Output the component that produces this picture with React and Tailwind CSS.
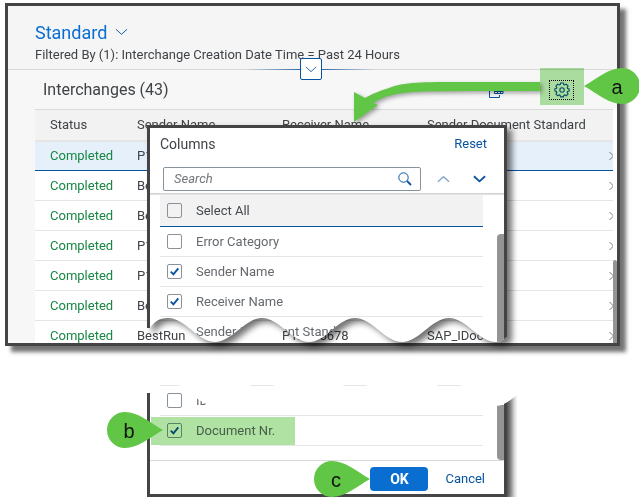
import React from "react";

const rows = [
  ["P12345678", "BestRun", "SAP_IDoc"],
  ["BestRun", "P12345678", "SAP_IDoc"],
  ["BestRun", "P12345678", "SAP_IDoc"],
  ["P12345678", "BestRun", "SAP_IDoc"],
  ["P12345678", "BestRun", "SAP_IDoc"],
  ["BestRun", "P12345678", "SAP_IDoc"],
  ["BestRun", "P12345678", "SAP_IDoc"],
];

function Chevron({ up = false, className }) {
  return (
    <svg viewBox="0 0 14 8" fill="none" stroke="currentColor" className={className} aria-hidden="true">
      <path d={up ? "M1 7 7 1.5 13 7" : "M1 1 7 6.5 13 1"} />
    </svg>
  );
}

function CheckRow({ label, checked = false, className = "" }) {
  return (
    <label className={`flex items-center gap-[14px] border-b pl-[7px] text-[#666a6e] ${className}`}>
      <span className="grid size-[15px] shrink-0">
        <input
          type="checkbox"
          defaultChecked={checked}
          className="peer col-start-1 row-start-1 size-[15px] appearance-none rounded-xs border border-[#89919a] bg-transparent"
        />
        <svg
          viewBox="0 0 15 15"
          className="pointer-events-none invisible col-start-1 row-start-1 size-[15px] peer-checked:visible"
          fill="none"
          stroke="#0854a0"
          strokeWidth="1.9"
          aria-hidden="true"
        >
          <path d="M3.8 7.6 6.4 10.4 11.3 4.4" />
        </svg>
      </span>
      {label}
    </label>
  );
}

/* Drop-shaped step marker; its tip points left or right. */
function Marker({ letter, left = false, className }) {
  return (
    <div className={`absolute h-[36px] w-[56px] ${className}`}>
      <svg viewBox="0 0 56 36" className="h-full w-full" aria-hidden="true">
        <path
          fill="#61c546"
          d={
            left
              ? "M0 18C14 10 25 0 38 0A18 18 0 0 1 38 36C25 36 14 26 0 18Z"
              : "M56 18C42 10 31 0 18 0A18 18 0 0 0 18 36C31 36 42 26 56 18Z"
          }
        />
        <text
          x={left ? 33 : 22}
          y="26"
          textAnchor="middle"
          className="fill-[#111] font-['Liberation_Sans',sans-serif] text-[20px]"
        >
          {letter}
        </text>
      </svg>
    </div>
  );
}

function Interchanges() {
  return (
    <main className="mr-[19px] ml-[5px] border-3 border-[#444] bg-[#f7f7f7] shadow-[6px_6px_4px_rgba(0,0,0,0.55)]">
      <header className="relative border-b border-[#d9d9d9] bg-[#f5f5f5] pt-[14px] pb-[4px] pl-[27px]">
        <button className="flex h-6 items-center gap-2 text-[18px] text-[#0a6ed1]">
          Standard
          <Chevron className="h-[8px] w-[13px] text-[#0854a0]" />
        </button>
        <p className="mt-px h-5 text-[13px] leading-5">
          Filtered By (1): Interchange Creation Date Time = Past 24 Hours
        </p>
        <div className="absolute right-1 -bottom-px left-0 mx-auto h-px w-[130px] bg-linear-to-r from-transparent via-[#0854a0] to-transparent" />
        <button
          aria-label="Expand header"
          className="absolute top-[52px] right-1 left-0 mx-auto flex size-[22px] items-center justify-center rounded-xs border border-[#0854a0] bg-white text-[#0854a0]"
        >
          <Chevron className="h-[7px] w-[12px]" />
        </button>
      </header>
      <div className="flex h-[39px] items-center justify-between pr-[43px] pl-[35px]">
        <h1 className="text-[16px]">Interchanges (43)</h1>
        <div className="flex items-center text-[#0854a0]">
          <button aria-label="Export" className="mr-[18px]">
            <svg viewBox="0 0 16 16" className="size-[16px]" fill="none" stroke="currentColor" aria-hidden="true">
              <path d="M5 2.500H1.500V15.500H11.500V13M6.500 4.500H15V11.500H6.500ZM6.500 7H15M6.500 9.500H15M9.500 4.500V11.500M12.500 4.500V11.500" />
            </svg>
          </button>
          <button aria-label="Export options" className="mr-[20px]">
            <Chevron className="h-[5px] w-[7px]" />
          </button>
          <button
            aria-label="Settings"
            className="flex h-[20px] w-[25px] items-center justify-center border border-dotted border-black"
          >
            <svg viewBox="0 0 16 16" className="size-[16px]" fill="none" stroke="currentColor" strokeWidth="1.100" aria-hidden="true">
              <path d="M6.600 1h2.800l.4 1.600 1 .4 1.500-.9 1.800 1.900-.9 1.500.4 1 1.500.3v2.300l-1.500.4-.4 1 .9 1.400-1.800 1.900-1.500-.9-1 .4-.4 1.600H6.600l-.4-1.600-1-.4-1.500.9L1.900 11.900l.9-1.400-.4-1L.9 9.100V6.800l1.500-.3.4-1L1.900 4l1.800-1.900 1.500.9 1-.4Z" />
              <circle cx="8" cy="8" r="2.200" />
            </svg>
          </button>
        </div>
      </div>
      <div className="flex h-[234px] items-end overflow-hidden pl-[27px]">
        <div className="h-full flex-1 overflow-hidden bg-white">
          <table className="w-full table-fixed border-collapse text-left text-[13px]">
            <thead>
              <tr className="h-[31px] border-t border-b-2 border-t-[#d9d9d9] border-b-[#e5e5e5] bg-[#f2f2f2]">
                <th className="w-[102px] pl-[15px] font-normal">Status</th>
                <th className="w-[145px] font-normal">Sender Name</th>
                <th className="w-[145px] font-normal">Receiver Name</th>
                <th className="font-normal">Sender Document Standard</th>
              </tr>
            </thead>
            <tbody>
              {rows.map((r, i) => (
                <tr
                  key={i}
                  className={
                    i === 0
                      ? "h-[30px] border-b border-[#0854a0] bg-[#e5f0fa]"
                      : "h-[30px] border-b border-[#e5e5e5] bg-white"
                  }
                >
                  <td className="pl-[15px] text-[#198744]">Completed</td>
                  <td>{r[0]}</td>
                  <td>{r[1]}</td>
                  <td>
                    <div className="flex items-center justify-between">
                      {r[2]}
                      <svg viewBox="0 0 4 10" className="h-[10px] w-[4px]" fill="none" stroke="#77797c" aria-hidden="true">
                        <path d="M.5 1 4.500 5 .5 9" />
                      </svg>
                    </div>
                  </td>
                </tr>
              ))}
            </tbody>
          </table>
        </div>
        <div className="h-full w-1 shrink-0 bg-white pt-[151px]">
          <div className="h-full rounded-t-sm bg-[#949494]" />
        </div>
      </div>
    </main>
  );
}

/* Upper half of the dialog, torn off along a wave. */
function DialogTop() {
  return (
    <section
      aria-label="Columns"
      className="absolute top-[125px] left-[147px] w-[360px] drop-shadow-[5px_4px_3px_rgba(0,0,0,0.55)]"
    >
      <div className="h-[220px] overflow-hidden border-3 border-b-0 border-[#444] bg-white text-[13px] [clip-path:path('M0_0H360V212C356_215_353_217_349_217C332_217_319_193_302_193C285_193_272_217_255_217C238_217_225_193_208_193C191_193_179_217_162_217C145_217_132_193_115_193C98_193_85_217_68_217C51_217_38_193_21_193C12_193_7_197_3_203H0Z')]">
        <div className="flex h-8 items-center justify-between pr-[17px] pl-[10px]">
          <h2 className="text-[14px]">Columns</h2>
          <button className="text-[#0854a0]">Reset</button>
        </div>
        <div className="flex items-center border-b border-[#d0d0d0] pt-[7px] pr-[18px] pb-[2px] pl-[13px] shadow-[0_1px_1px_#e5e5e5]">
          <div className="flex h-6 flex-1 items-center rounded-xs border border-[#89919a] pr-[8px] pl-[10px]">
            <input
              type="search"
              aria-label="Search"
              placeholder="Search"
              className="min-w-0 flex-1 outline-none placeholder:text-[#74777a] placeholder:italic"
            />
            <svg viewBox="0 0 14 14" className="size-[14px]" fill="none" stroke="#0854a0" aria-hidden="true">
              <circle cx="5.500" cy="5.500" r="4.700" />
              <path d="M9 9 13 13" strokeWidth="1.800" />
            </svg>
          </div>
          <button aria-label="Move up" className="ml-[16px] text-[#0854a0] opacity-50">
            <Chevron up className="h-[8px] w-[13px] stroke-[1.500]" />
          </button>
          <button aria-label="Move down" className="ml-[23px] text-[#0854a0]">
            <Chevron className="h-[8px] w-[13px] stroke-2" />
          </button>
        </div>
        <div className="flex">
          <div className="flex-1 pt-px pl-[10px]">
            <CheckRow label="Select All" className="h-8 border-[#0854a0] bg-[#f2f2f2] text-[#45494d]" />
            <CheckRow label="Error Category" className="h-[30px] border-[#e5e5e5]" />
            <CheckRow label="Sender Name" checked className="h-[30px] border-[#e5e5e5]" />
            <CheckRow label="Receiver Name" checked className="h-[30px] border-[#e5e5e5]" />
            <p className="h-[30px] pl-[36px] leading-[30px] text-[#666a6e]">Sender Document Standard</p>
          </div>
          <div className="ml-[14px] w-[7px] pt-[40px]">
            <div className="h-full rounded-tl-sm bg-[#949494]" />
          </div>
        </div>
      </div>
    </section>
  );
}

/* Lower half of the dialog; the wave cuts panel and shadow alike. */
function DialogBottom() {
  return (
    <section
      aria-label="Columns, continued"
      className="relative mt-[34px] ml-[147px] w-[360px] drop-shadow-[5px_4px_3px_rgba(0,0,0,0.7)] [clip-path:path('M0_13H3C7_7_12_2_21_2C38_2_51_26_68_26C85_26_98_2_115_2C132_2_145_26_162_26C179_26_191_2_208_2C225_2_238_26_255_26C272_26_285_2_302_2C319_2_332_26_349_26C357_26_363_20_370_15V130H0Z')]"
    >
      <div className="border-3 border-t-0 border-[#444] bg-white text-[13px]">
        <div className="flex">
          <div className="flex-1 pt-[5px]">
            <CheckRow label="ID" className="ml-[10px] h-[31px] border-t border-[#e5e5e5]" />
            <div className="relative">
              <CheckRow label="Document Nr." checked className="ml-[10px] h-[30px] border-[#e5e5e5]" />
              <div className="absolute inset-y-px left-px w-[144px] bg-[#b0e2a4] mix-blend-multiply" />
            </div>
          </div>
          <div className="-mb-[14px] ml-[14px] w-[7px] pt-[25px]">
            <div className="h-full rounded-bl-sm bg-[#949494]" />
          </div>
        </div>
        <footer className="mt-[14px] flex h-[34px] items-center justify-end gap-[17px] border-t border-[#d9d9d9] pt-[3px] pr-[19px]">
          <button className="h-6 w-[58px] rounded-sm bg-[#0a6ed1] text-[14px] font-bold text-white">OK</button>
          <button className="text-[#0854a0]">Cancel</button>
        </footer>
      </div>
    </section>
  );
}

export default function App() {
  return (
    <div className="relative overflow-hidden bg-white pt-[3px] font-[Roboto,sans-serif] text-[#3f4347]">
      <Interchanges />
      <DialogTop />
      <DialogBottom />
      <div className="absolute top-[68px] right-[55px] h-[37px] w-[44px] bg-[#b0e2a4] mix-blend-multiply" />
      <svg
        viewBox="0 0 190 44"
        className="absolute top-[80px] right-[99px] h-[44px] w-[190px] drop-shadow-[2px_2px_2px_rgba(0,0,0,0.35)]"
        fill="#61c546"
        aria-hidden="true"
      >
        <path d="M190 2H110C75 2 53 2 39 8C29 11 22 14 15 18L4 12V42L28 25L23 23C33 17 45 12 75 11.500C115 11 150 11 190 11Z" />
      </svg>
      <Marker letter="a" left className="top-[68px] right-[-1px]" />
      <Marker letter="b" className="top-[412px] left-[107px]" />
      <Marker letter="c" className="top-[461px] left-[314px]" />
    </div>
  );
}
